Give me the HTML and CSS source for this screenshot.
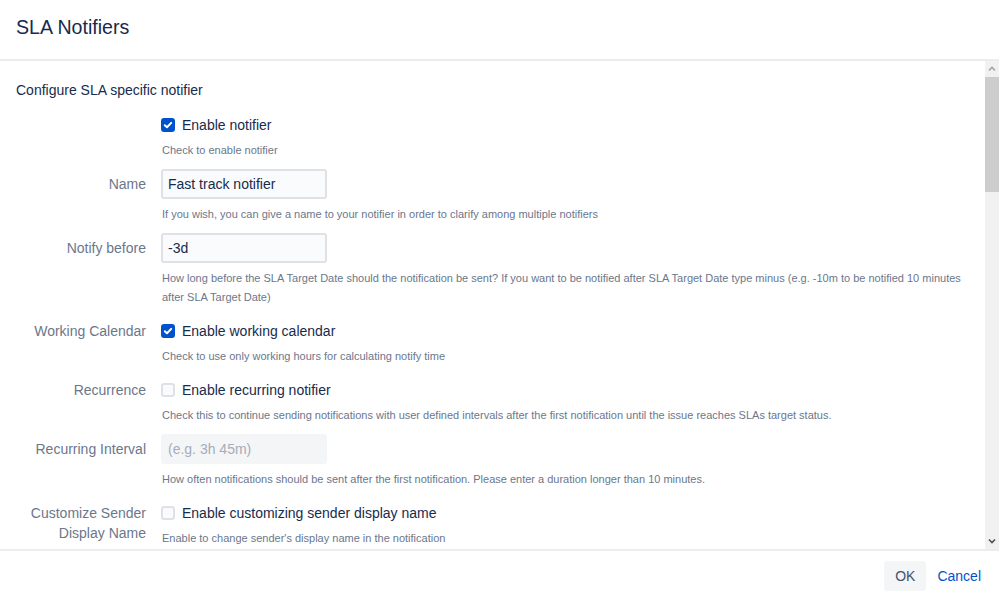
FILE: index.html
```html
<!DOCTYPE html>
<html lang="en">
<head>
    <meta charset="UTF-8">
    <title>SLA Notifiers</title>
    <link rel="stylesheet" href="styles.css">
</head>
<body>
<div class="dialog">
    <header class="dialog-header">
        <h2>SLA Notifiers</h2>
    </header>

    <div class="dialog-body">
        <div class="dialog-content">
            <p class="intro">Configure SLA specific notifier</p>

            <form class="notifier-form">
                <div class="field check">
                    <div class="field-label"></div>
                    <div class="field-control">
                        <label class="checkbox"><span class="box checked"><svg width="14" height="14" viewBox="0 0 14 14"><path d="M3.8 7.2 L6 9.2 L10.2 4.9" fill="none" stroke="#fff" stroke-width="2" stroke-linecap="round" stroke-linejoin="round"/></svg></span>Enable notifier</label>
                        <div class="help">Check to enable notifier</div>
                    </div>
                </div>

                <div class="field text">
                    <label class="field-label" for="name">Name</label>
                    <div class="field-control">
                        <input class="text-input" id="name" type="text" value="Fast track notifier">
                        <div class="help">If you wish, you can give a name to your notifier in order to clarify among multiple notifiers</div>
                    </div>
                </div>

                <div class="field text">
                    <label class="field-label" for="before">Notify before</label>
                    <div class="field-control">
                        <input class="text-input" id="before" type="text" value="-3d">
                        <div class="help">How long before the SLA Target Date should the notification be sent? If you want to be notified after SLA Target Date type minus (e.g. -10m to be notified 10 minutes after SLA Target Date)</div>
                    </div>
                </div>

                <div class="field check">
                    <div class="field-label">Working Calendar</div>
                    <div class="field-control">
                        <label class="checkbox"><span class="box checked"><svg width="14" height="14" viewBox="0 0 14 14"><path d="M3.8 7.2 L6 9.2 L10.2 4.9" fill="none" stroke="#fff" stroke-width="2" stroke-linecap="round" stroke-linejoin="round"/></svg></span>Enable working calendar</label>
                        <div class="help">Check to use only working hours for calculating notify time</div>
                    </div>
                </div>

                <div class="field check">
                    <div class="field-label">Recurrence</div>
                    <div class="field-control">
                        <label class="checkbox"><span class="box"></span>Enable recurring notifier</label>
                        <div class="help">Check this to continue sending notifications with user defined intervals after the first notification until the issue reaches SLAs target status.</div>
                    </div>
                </div>

                <div class="field text">
                    <label class="field-label" for="interval">Recurring Interval</label>
                    <div class="field-control">
                        <input class="text-input" id="interval" type="text" placeholder="(e.g. 3h 45m)" disabled>
                        <div class="help">How often notifications should be sent after the first notification. Please enter a duration longer than 10 minutes.</div>
                    </div>
                </div>

                <div class="field check">
                    <div class="field-label">Customize Sender Display Name</div>
                    <div class="field-control">
                        <label class="checkbox"><span class="box"></span>Enable customizing sender display name</label>
                        <div class="help">Enable to change sender's display name in the notification</div>
                    </div>
                </div>
            </form>
        </div>

        <div class="scrollbar">
            <div class="sb-arrow">
                <svg width="14" height="16" viewBox="0 0 14 16"><path d="M4 9.5 L7 6.5 L10 9.5" fill="none" stroke="#a3a3a3" stroke-width="1.6"/></svg>
            </div>
            <div class="sb-track"><div class="sb-thumb"></div></div>
            <div class="sb-arrow">
                <svg width="14" height="16" viewBox="0 0 14 16"><path d="M4 6.5 L7 9.5 L10 6.5" fill="none" stroke="#505050" stroke-width="1.6"/></svg>
            </div>
        </div>
    </div>

    <footer class="dialog-footer">
        <button class="btn">OK</button>
        <a class="link-btn" href="#">Cancel</a>
    </footer>
</div>
</body>
</html>
```

FILE: styles.css
```css
body { margin: 0; font-family: "Liberation Sans", Arial, sans-serif; color: #172b4d; background: #fff; }

.dialog { height: 602px; display: flex; flex-direction: column; }

.dialog-header { padding: 15px 16px 20px; border-bottom: 2px solid #ebecf0; }
.dialog-header h2 { margin: 0; font-size: 19.6px; line-height: 24px; font-weight: normal; color: #172b4d; }

.dialog-body { flex: 1; display: flex; min-height: 0; border-bottom: 2px solid #ebecf0; }
.dialog-content { flex: 1; overflow: hidden; padding: 18px 16px 0; }

.intro { margin: 0; font-size: 14px; line-height: 20px; padding-top: 1px; margin-bottom: -1px; }

.field { display: grid; grid-template-columns: 130px 1fr; column-gap: 15px; margin-top: 10px; }
.field:first-child { margin-top: 11px; }
.field-label { text-align: right; font-size: 14px; line-height: 20px; padding-top: 5px; color: #6b778c; }

.checkbox { height: 30px; display: flex; align-items: center; gap: 7px; font-size: 14px; color: #172b4d; }
.box { width: 14px; height: 14px; box-sizing: border-box; border: 2px solid #dfe1e6; border-radius: 3px; background: #fafbfc; display: flex; }
.box.checked { border-color: #0052cc; background: #0052cc; }
.box svg { margin: -2px; }

.text-input { display: block; width: 166px; height: 30px; box-sizing: border-box; margin: 0; padding: 0 5px; border: 2px solid #dfe1e6; border-radius: 3px; background: #fafbfc; font-family: inherit; font-size: 14px; color: #172b4d; outline: none; }
.text-input:disabled { background: #f4f5f7; border-color: #f4f5f7; }
.text-input::placeholder { color: #a5adba; }

.help { font-size: 11px; line-height: 19px; color: #6b778c; padding: 1px 0 0 1px; margin-bottom: -1px; }
.field.text .help { margin-top: 5px; }

.scrollbar { width: 14px; display: flex; flex-direction: column; background: #f1f1f1; }
.sb-arrow { height: 16px; display: flex; }
.sb-track { flex: 1; }
.sb-thumb { height: 115px; background: #cdcdcd; }

.dialog-footer { height: 51px; box-sizing: border-box; display: flex; align-items: center; justify-content: flex-end; gap: 11px; padding: 0 18px 1px 0; }
.btn { height: 30px; padding: 0 11px; border: none; border-radius: 3px; background: #f4f5f7; font-family: inherit; font-size: 14px; color: #42526e; cursor: pointer; }
.link-btn { font-size: 14px; color: #0052cc; text-decoration: none; }
```
